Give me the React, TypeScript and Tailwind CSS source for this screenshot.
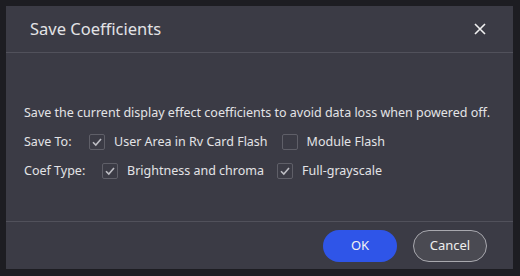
import React from "react";

function Check({ checked }: { checked: boolean }) {
  return (
    <span className="flex h-[16px] w-[16px] items-center justify-center rounded-[2px] border border-[#5f5f68] bg-[#3b3b45]">
      {checked && (
        <svg width="12" height="12" viewBox="0 0 12 12" fill="none">
          <path d="M2 6.2 L4.8 9 L10 3" stroke="#bdbdc3" strokeWidth="1.6" />
        </svg>
      )}
    </span>
  );
}

function Opt({ checked, label }: { checked: boolean; label: string }) {
  return (
    <div className="flex items-center gap-[9px]">
      <Check checked={checked} />
      <span>{label}</span>
    </div>
  );
}

export default function App() {
  return (
    <div
      className="h-[276px] w-[520px] bg-[#1d1d22] p-[6px] pb-[7px] pr-[7px]"
      style={{ fontFamily: '"Noto Sans", "Open Sans", sans-serif' }}
    >
      <div className="flex h-full w-full flex-col bg-[#3b3b45] text-[#e3e3e6]">
        <div className="flex h-[47px] items-center justify-between border-b border-[#51515b] pl-[24px] pr-[27px]">
          <span className="text-[16.5px]">Save Coefficients</span>
          <svg width="12" height="12" viewBox="0 0 12 12">
            <path d="M1 1 L11 11 M11 1 L1 11" stroke="#f0f0f0" strokeWidth="1.6" />
          </svg>
        </div>
        <div className="flex flex-1 flex-col gap-[10px] pl-[18px] pt-[51px] text-[12.5px]">
          <div>Save the current display effect coefficients to avoid data loss when powered off.</div>
          <div className="flex items-center">
            <span className="w-[65px]">Save To:</span>
            <div className="flex items-center gap-[14px]">
              <Opt checked label="User Area in Rv Card Flash" />
              <Opt checked={false} label="Module Flash" />
            </div>
          </div>
          <div className="flex items-center">
            <span className="w-[78px]">Coef Type:</span>
            <div className="flex items-center gap-[13px]">
              <Opt checked label="Brightness and chroma" />
              <Opt checked label="Full-grayscale" />
            </div>
          </div>
        </div>
        <div className="flex h-[48px] items-center justify-end gap-[16px] border-t border-[#51515b] pr-[26px]">
          <button className="h-[32px] w-[74px] rounded-full bg-[#2f55e8] text-[13px] text-[#f2f2f2]">OK</button>
          <button className="h-[32px] w-[74px] rounded-full border border-[#a8a8ae] bg-[#4a4a52] text-[13px] text-[#eeeeee]">
            Cancel
          </button>
        </div>
      </div>
    </div>
  );
}
